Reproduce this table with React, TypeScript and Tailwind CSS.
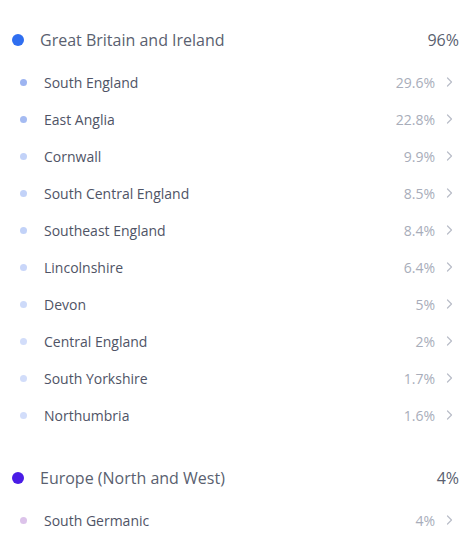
const groups = [
  {
    name: "Great Britain and Ireland",
    pct: "96%",
    dot: "bg-[#2f6ef0]",
    items: [
      { name: "South England", pct: "29.6%", dot: "bg-[#9db4f1]" },
      { name: "East Anglia", pct: "22.8%", dot: "bg-[#a5bbf2]" },
      { name: "Cornwall", pct: "9.9%", dot: "bg-[#c2d2f8]" },
      { name: "South Central England", pct: "8.5%", dot: "bg-[#c2d2f8]" },
      { name: "Southeast England", pct: "8.4%", dot: "bg-[#c2d2f8]" },
      { name: "Lincolnshire", pct: "6.4%", dot: "bg-[#c9d6f9]" },
      { name: "Devon", pct: "5%", dot: "bg-[#cddaf9]" },
      { name: "Central England", pct: "2%", dot: "bg-[#d2ddfa]" },
      { name: "South Yorkshire", pct: "1.7%", dot: "bg-[#d2ddfa]" },
      { name: "Northumbria", pct: "1.6%", dot: "bg-[#d2ddfa]" },
    ],
  },
  {
    name: "Europe (North and West)",
    pct: "4%",
    dot: "bg-[#4a1ce6]",
    items: [{ name: "South Germanic", pct: "4%", dot: "bg-[#dcc3ea]" }],
  },
];

function Chevron() {
  return (
    <svg width="8" height="12" viewBox="0 0 8 12" fill="none" className="text-[#b9bdc8]">
      <path d="M2.5 2l4 4-4 4" stroke="currentColor" strokeWidth="1.2" strokeLinecap="round" strokeLinejoin="round" />
    </svg>
  );
}

export default function App() {
  return (
    <div className="w-[473px] h-[555px] bg-white font-['Open_Sans',sans-serif] pt-[26px] pl-3 pr-[14px] overflow-hidden">
      {groups.map((g, gi) => (
        <div key={g.name} className={gi > 0 ? "mt-[38px]" : ""}>
          <div className="flex items-center h-[28px]">
            <span className={`w-3 h-3 rounded-full ${g.dot}`} />
            <span className="ml-[16px] text-[16px] text-[#5a5f70]">{g.name}</span>
            <span className="ml-auto text-[16px] text-[#5a5f70]">{g.pct}</span>
          </div>
          <div className="mt-[17px] flex flex-col gap-[15px]">
            {g.items.map((it) => (
              <div key={it.name} className="flex items-center h-[22px] pl-[8px] pr-[6px]">
                <span className={`w-[7px] h-[7px] rounded-full ${it.dot}`} />
                <span className="ml-[17px] text-[14px] text-[#4f5466]">{it.name}</span>
                <span className="ml-auto text-[14px] text-[#a8adba]">{it.pct}</span>
                <span className="ml-[10px]">
                  <Chevron />
                </span>
              </div>
            ))}
          </div>
        </div>
      ))}
    </div>
  );
}
